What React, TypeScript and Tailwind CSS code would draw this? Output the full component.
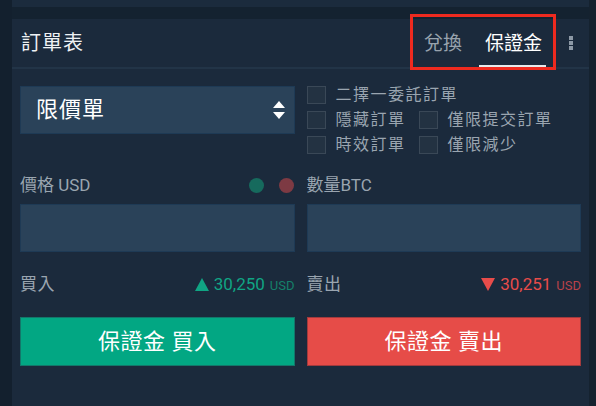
import React from "react";

const font = { fontFamily: "Roboto, 'Noto Sans CJK TC', sans-serif" };

function Check({ label }: { label: string }) {
  return (
    <label className="flex h-[18px] items-center gap-[10px]">
      <span className="h-[18px] w-[19px] shrink-0 border border-[#3a4857] bg-[#233242]" />
      <span className="text-[16px] leading-none tracking-[1.5px] text-[#9aa5b0]">{label}</span>
    </label>
  );
}

function Price({ up, value }: { up: boolean; value: string }) {
  const color = up ? "text-[#10a584]" : "text-[#e84c4a]";
  const sub = up ? "text-[#15806a]" : "text-[#b8424a]";
  return (
    <div className={`flex items-baseline gap-[5px] ${color}`}>
      <svg width="14" height="13" viewBox="0 0 14 13" className="self-center" fill="currentColor">
        {up ? <path d="M7 0 L14 13 L0 13 Z" /> : <path d="M0 0 L14 0 L7 13 Z" />}
      </svg>
      <span className="text-[17px] leading-none">{value}</span>
      <span className={`text-[13px] leading-none ${sub}`}>USD</span>
    </div>
  );
}

export default function App() {
  return (
    <div className="flex h-[406px] w-[596px] bg-[#142230]" style={font}>
      <div className="w-[12px] shrink-0 bg-[#13202e]" />
      <div className="flex w-[577px] flex-col">
        <div className="h-[7px] bg-[#1b2b3d]" />
        <div className="h-[12px]" />
        <div className="relative flex-1 bg-[#1b2a3c]">
          {/* header */}
          <div className="flex h-[50px] items-center justify-between border-b-2 border-[#223447] pl-[9px] pr-[16px]">
            <h2 className="text-[20px] tracking-[1px] leading-none text-[#eef1f4]">訂單表</h2>
            <div className="flex h-full items-center">
              <div className="flex h-full items-center">
                <span className="px-[3px] text-[19px] leading-none text-[#98a3ad]">兌換</span>
                <span className="relative ml-[14px] flex h-full items-center px-[6px] text-[19px] leading-none text-white">
                  保證金
                  <span className="absolute bottom-[0px] left-0 right-[2px] h-[2px] bg-[#e6e9ec]" />
                </span>
              </div>
              <div className="ml-[21px] flex flex-col gap-[1px]">
                <span className="h-[4px] w-[4px] bg-[#8d99a6]" />
                <span className="h-[4px] w-[4px] bg-[#8d99a6]" />
                <span className="h-[4px] w-[4px] bg-[#8d99a6]" />
              </div>
            </div>
          </div>
          {/* highlight box */}
          <div className="pointer-events-none absolute left-[398px] top-[-5px] h-[56px] w-[146px] border-[3px] border-[#ee2a1f]" />

          <div className="px-[8px] pt-[17px]">
            <div className="flex gap-[12px]">
              <div className="w-[275px]">
                <div className="flex h-[48px] items-center justify-between border border-[#1e3a55] bg-[#2a4259] pl-[15px] pr-[9px]">
                  <span className="text-[22px] leading-none tracking-[1px] text-white">限價單</span>
                  <svg width="12" height="18" viewBox="0 0 12 18" fill="#ffffff">
                    <path d="M6 0 L12 7 L0 7 Z" />
                    <path d="M0 11 L12 11 L6 18 Z" />
                  </svg>
                </div>
              </div>
              <div className="flex w-[275px] flex-col gap-[7px]">
                <Check label="二擇一委託訂單" />
                <div className="flex">
                  <div className="w-[112px]"><Check label="隱藏訂單" /></div>
                  <Check label="僅限提交訂單" />
                </div>
                <div className="flex">
                  <div className="w-[112px]"><Check label="時效訂單" /></div>
                  <Check label="僅限減少" />
                </div>
              </div>
            </div>

            <div className="mt-[21px] flex gap-[12px]">
              <div className="flex h-[20px] w-[275px] items-center justify-between">
                <span className="text-[17px] leading-none text-[#9aa5b0]">價格 USD</span>
                <div className="flex items-center gap-[15px] pr-[1px]">
                  <span className="h-[15px] w-[15px] rounded-full bg-[#166a5d]" />
                  <span className="h-[15px] w-[15px] rounded-full bg-[#7d3a43]" />
                </div>
              </div>
              <div className="flex h-[20px] w-[275px] items-center">
                <span className="text-[17px] leading-none text-[#9aa5b0]">數量BTC</span>
              </div>
            </div>

            <div className="mt-[9px] flex gap-[12px]">
              <div className="h-[48px] w-[275px] border border-[#1e3a55] bg-[#2a4259]" />
              <div className="h-[48px] w-[275px] border border-[#1e3a55] bg-[#2a4259]" />
            </div>

            <div className="mt-[22px] flex gap-[12px]">
              <div className="flex h-[20px] w-[275px] items-center justify-between">
                <span className="text-[17px] leading-none tracking-[0.5px] text-[#9aa5b0]">買入</span>
                <Price up value="30,250" />
              </div>
              <div className="flex h-[20px] w-[275px] items-center justify-between">
                <span className="text-[17px] leading-none tracking-[0.5px] text-[#9aa5b0]">賣出</span>
                <Price up={false} value="30,251" />
              </div>
            </div>

            <div className="mt-[23px] flex gap-[12px]">
              <button className="flex h-[49px] w-[275px] items-center justify-center border border-[#13776a] bg-[#02a783] text-[22px] leading-none tracking-[0.5px] text-white">
                保證金 買入
              </button>
              <button className="flex h-[49px] w-[275px] items-center justify-center border border-[#a23a3d] bg-[#e64c48] text-[22px] leading-none tracking-[0.5px] text-white">
                保證金 賣出
              </button>
            </div>
          </div>
        </div>
      </div>
      <div className="w-[7px] shrink-0 bg-[#15222f]" />
    </div>
  );
}
